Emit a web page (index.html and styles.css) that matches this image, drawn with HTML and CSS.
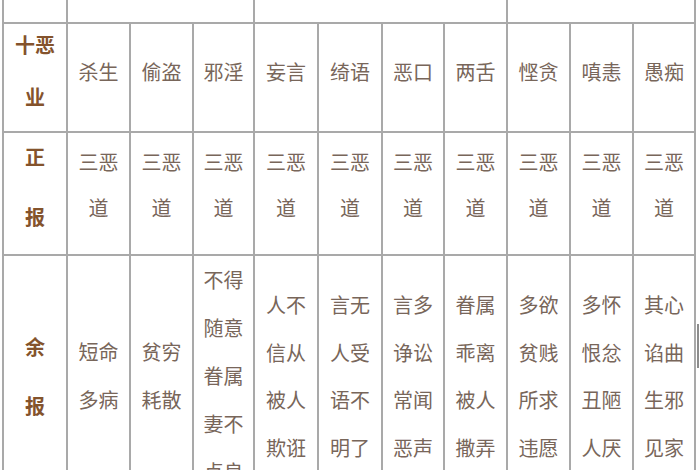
FILE: index.html
```html
<!DOCTYPE html>
<html lang="zh">
<head>
<meta charset="utf-8">
<title>十恶业果报表</title>
<link rel="stylesheet" href="styles.css">
</head>
<body>
<div class="page">
<table class="karma">
  <colgroup>
    <col class="c64"><col class="c63"><col class="c63"><col class="c61"><col class="c64"><col class="c64"><col class="c62"><col class="c63"><col class="c63"><col class="c63"><col class="c62">
  </colgroup>
  <tr class="r0">
    <td>类别</td>
    <td colspan="3">身业</td>
    <td colspan="4">口业</td>
    <td colspan="3">意业</td>
  </tr>
  <tr class="r1">
    <th><span class="ln">十恶</span><span class="ln second">业</span></th>
    <td>杀生</td><td>偷盗</td><td>邪淫</td><td>妄言</td><td>绮语</td><td>恶口</td><td>两舌</td><td>悭贪</td><td>嗔恚</td><td>愚痴</td>
  </tr>
  <tr class="r2">
    <th><span class="ln">正</span><span class="ln second">报</span></th>
    <td>三恶<br>道</td><td>三恶<br>道</td><td>三恶<br>道</td><td>三恶<br>道</td><td>三恶<br>道</td><td>三恶<br>道</td><td>三恶<br>道</td><td>三恶<br>道</td><td>三恶<br>道</td><td>三恶<br>道</td>
  </tr>
  <tr class="r3">
    <th>余<br>报</th>
    <td class="two">短命<br>多病</td>
    <td class="two">贫穷<br>耗散</td>
    <td class="five">不得<br>随意<br>眷属<br>妻不<br>贞良</td>
    <td>人不<br>信从<br>被人<br>欺诳</td>
    <td>言无<br>人受<br>语不<br>明了</td>
    <td>言多<br>诤讼<br>常闻<br>恶声</td>
    <td>眷属<br>乖离<br>被人<br>撒弄</td>
    <td>多欲<br>贫贱<br>所求<br>违愿</td>
    <td>多怀<br>恨忿<br>丑陋<br>人厌</td>
    <td>其心<br>谄曲<br>生邪<br>见家</td>
  </tr>
</table>
<div class="scroll-mark"></div>
</div>
</body>
</html>
```

FILE: styles.css
```css
html, body {
  margin: 0;
  padding: 0;
  background: #ffffff;
}
.page {
  position: relative;
  width: 700px;
  height: 470px;
  overflow: hidden;
}
.karma {
  border-collapse: collapse;
  table-layout: fixed;
  width: 694px;
  margin-left: 2px;
  margin-top: -23px;
  font-family: "Noto Sans CJK SC", "Noto Sans", sans-serif;
  font-size: 20px;
  color: #78665a;
}
.c64 { width: 64px; }
.c63 { width: 63px; }
.c62 { width: 62px; }
.c61 { width: 61px; }
.karma td, .karma th {
  border: 2px solid #a9a9a9;
  text-align: center;
  padding: 0;
  font-weight: normal;
}
.karma th {
  font-weight: bold;
  color: #84532c;
}
.ln {
  display: block;
  line-height: 40px;
}

/* top group row, mostly scrolled out of view */
.r0 { height: 44px; }
.r0 td {
  vertical-align: bottom;
  padding-bottom: 23px;
  line-height: 20px;
  color: #8a7868;
}

/* 十恶业 row */
.r1 { height: 109px; }
.r1 td, .r1 th { vertical-align: top; }
.r1 td {
  padding-top: 24px;
  line-height: 48px;
}
.r1 th { padding-top: 1px; }
.r1 th .second { margin-top: 12px; }

/* 正报 row */
.r2 { height: 123px; }
.r2 td, .r2 th { vertical-align: top; }
.r2 td {
  padding-top: 6px;
  line-height: 46px;
}
.r2 th { padding-top: 4px; }
.r2 th .second { margin-top: 20px; }

/* 余报 row */
.r3 { height: 242px; }
.r3 td, .r3 th {
  vertical-align: middle;
  line-height: 47.5px;
}
.r3 td.two, .r3 td.five { line-height: 48px; }
.r3 th { line-height: 59.5px; }

.scroll-mark {
  position: absolute;
  left: 697px;
  top: 324px;
  width: 2px;
  height: 44px;
  background: #8d8d8d;
}
```
